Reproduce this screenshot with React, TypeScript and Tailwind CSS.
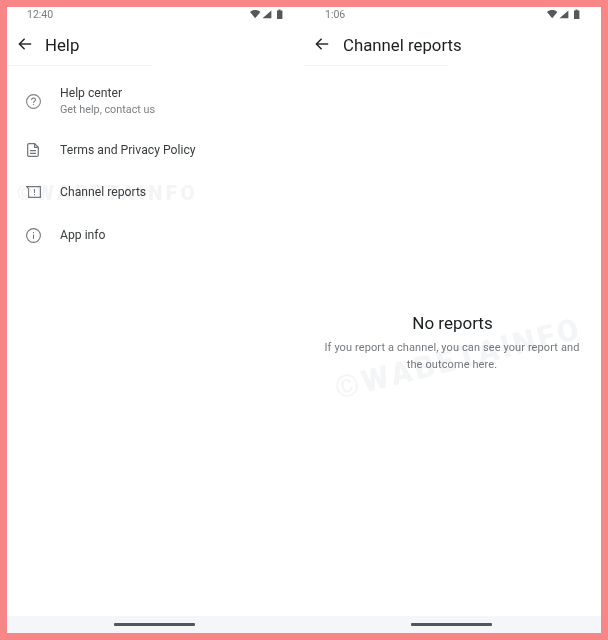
const font = { fontFamily: 'Roboto, "Liberation Sans", sans-serif' };

function StatusIcons() {
  return (
    <svg width="33" height="11" viewBox="0 0 33 11" className="block -mt-[2px]">
      <path d="M0 3 C3 0.4 7.4 0.4 10.4 3 L5.2 9.2 Z" fill="#55585b" />
      <path d="M12.5 9.2 L21.4 1.6 V9.2 Z" fill="#55585b" />
      <path d="M28.5 1.4 V0.4 H30.5 V1.4 H32.4 V10 H27 V1.4 Z" fill="#55585b" />
    </svg>
  );
}

function BackArrow() {
  return (
    <svg width="14" height="14" viewBox="0 0 14 14" fill="none" stroke="#1c1f21" strokeWidth="1.4">
      <path d="M13.2 7 H1.4" />
      <path d="M6.6 1.8 L1.4 7 L6.6 12.2" />
    </svg>
  );
}

function Header({ time, title, titleClass, rowClass, statusClass }: { time: string; title: string; titleClass: string; rowClass: string; statusClass: string }) {
  return (
    <>
      <div className={`flex h-[16px] items-center justify-between shrink-0 ${statusClass}`}>
        <span className="text-[10.5px] text-[#787c80]">{time}</span>
        <StatusIcons />
      </div>
      <div className={`flex h-[42px] items-center shrink-0 ${rowClass}`}>
        <BackArrow />
        <span className={`text-[16.8px] text-[#1b1e20] mt-[3px] ${titleClass}`}>{title}</span>
      </div>
      <div className="h-px w-[145px] bg-[#f3f4f5] shrink-0" />
    </>
  );
}

function QuestionIcon() {
  return (
    <svg width="15" height="15" viewBox="0 0 15 15" fill="none" stroke="#7d8286" strokeWidth="1.1">
      <circle cx="7.5" cy="7.5" r="6.9" />
      <path d="M5.5 5.9 C5.5 3.5 9.5 3.5 9.5 5.8 C9.5 7.3 7.5 7.3 7.5 8.9" />
      <path d="M7.5 10 V11.2" />
    </svg>
  );
}

function DocIcon() {
  return (
    <svg width="12" height="14" viewBox="0 0 12 14" fill="none" stroke="#6f7478" strokeWidth="1.2">
      <path d="M0.7 1.9 C0.7 1.1 1.2 0.6 2 0.6 H7.6 L11.3 4.3 V12.2 C11.3 13 10.8 13.4 10 13.4 H2 C1.2 13.4 0.7 13 0.7 12.2 Z" />
      <path d="M7.6 0.6 V4.3 H11.3" />
      <path d="M3 7.6 H9 M3 10.3 H9" />
    </svg>
  );
}

function ReportIcon() {
  return (
    <svg width="15" height="12" viewBox="0 0 15 12" fill="none" stroke="#73787c" strokeWidth="1.1">
      <path d="M0.6 0.6 H14.4 V11.4 H2.6 V3 Z" />
      <path d="M8.5 3 V7 M8.5 8.1 V9.3" />
    </svg>
  );
}

function InfoIcon() {
  return (
    <svg width="15" height="15" viewBox="0 0 15 15" fill="none" stroke="#73787c" strokeWidth="1.1">
      <circle cx="7.5" cy="7.5" r="6.9" />
      <path d="M7.5 6.6 V11 M7.5 3.9 V5.2" />
    </svg>
  );
}

function Row({ icon, title, sub, className }: { icon: React.ReactNode; title: string; sub?: string; className: string }) {
  return (
    <div className={`flex items-center pl-[8px] ${className}`}>
      <div className="w-[36px] flex justify-center shrink-0">{icon}</div>
      <div className="ml-[9px]">
        <div className="text-[12.2px] leading-[16px] text-[#3a3e41]">{title}</div>
        {sub && <div className="text-[10.8px] leading-[17px] text-[#7b8084]">{sub}</div>}
      </div>
    </div>
  );
}

function NavBar({ className }: { className: string }) {
  return (
    <div className={`mt-auto h-[17px] bg-[#f4f6f9] flex justify-center items-start pt-[7px] shrink-0 ${className}`}>
      <div className="h-[3px] w-[81px] rounded-[1px] bg-[#53565a]" />
    </div>
  );
}

export default function App() {
  return (
    <div className="w-[608px] h-[640px] bg-[#f98686] pl-[7px] pr-[7px] pt-[7px] pb-[7px] flex" style={font}>
      <div className="relative w-[297px] h-full bg-white flex flex-col overflow-hidden">
        <Header time="12:40" title="Help" titleClass="ml-[13px]" rowClass="pl-[11px]" statusClass="pl-[20px] pr-[21px]" />
        <div className="pt-[15px]">
          <Row icon={<QuestionIcon />} title="Help center" sub="Get help, contact us" className="h-[40px]" />
          <Row icon={<DocIcon />} title="Terms and Privacy Policy" className="h-[42px] mt-[8px]" />
          <Row icon={<ReportIcon />} title="Channel reports" className="h-[42px]" />
          <Row icon={<InfoIcon />} title="App info" className="h-[44px]" />
        </div>
        <NavBar className="pr-[2px]" />
        <div className="absolute left-[10px] top-[171px] text-[20px] font-black tracking-[3.7px] text-[#f3f4f5] pointer-events-none mix-blend-multiply">©WABETAINFO</div>
      </div>
      <div className="relative w-[297px] h-full bg-white flex flex-col overflow-hidden">
        <Header time="1:06" title="Channel reports" titleClass="ml-[14px]" rowClass="pl-[11px]" statusClass="pl-[21px] pr-[21px]" />
        <div className="mt-[245px] text-center">
          <div className="text-[17px] leading-[24px] text-[#1b1e20]">No reports</div>
          <div className="mt-[4px] pr-[1px] text-[11px] tracking-[0.11px] leading-[17px] text-[#74797d]">
            If you report a channel, you can see your report and
            <br />
            the outcome here.
          </div>
        </div>
        <NavBar className="pr-[2px]" />
        <div className="absolute left-[28px] top-[329px] text-[31px] font-black tracking-[3.2px] text-[#f4f5f6] -rotate-[14deg] pointer-events-none mix-blend-multiply">©WABETAINFO</div>
      </div>
    </div>
  );
}
